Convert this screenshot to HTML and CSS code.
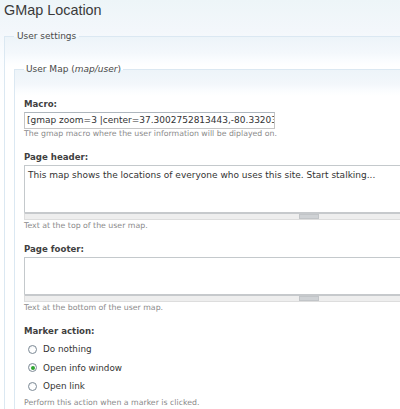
FILE: index.html
```html
<!DOCTYPE html>
<html lang="en">
<head>
	<meta charset="UTF-8">
	<title>GMap Location</title>
	<link rel="stylesheet" href="styles.css">
</head>
<body>
	<div class="page">
		<h1 class="title">GMap Location</h1>
		<fieldset class="outer">
			<legend>User settings</legend>
			<fieldset class="inner">
				<legend>User Map (<em>map/user</em>)</legend>

				<div class="item">
					<label>Macro:</label>
					<div class="text-input">[gmap zoom=3 |center=37.3002752813443,-80.332031</div>
					<div class="desc">The gmap macro where the user information will be diplayed on.</div>
				</div>

				<div class="item">
					<label>Page header:</label>
					<div class="area big">This map shows the locations of everyone who uses this site. Start stalking...</div>
					<div class="grippie"><span></span></div>
					<div class="desc">Text at the top of the user map.</div>
				</div>

				<div class="item">
					<label>Page footer:</label>
					<div class="area small"></div>
					<div class="grippie"><span></span></div>
					<div class="desc">Text at the bottom of the user map.</div>
				</div>

				<div class="item">
					<label>Marker action:</label>
					<div class="radios">
						<div class="radio"><span class="dot"></span>Do nothing</div>
						<div class="radio"><span class="dot on"></span>Open info window</div>
						<div class="radio"><span class="dot"></span>Open link</div>
					</div>
					<div class="desc">Perform this action when a marker is clicked.</div>
				</div>
			</fieldset>
		</fieldset>
	</div>
</body>
</html>
```

FILE: styles.css
```css
*{
	margin: 0;
	padding: 0;
	box-sizing: border-box;
}
html{
	overflow: hidden;
}
body{
	background: #fff;
	font-family: "DejaVu Sans", Verdana, sans-serif;
	font-size: 9px;
	color: #494949;
}
.page{
	width: 640px;
	background: linear-gradient(#edf5f8 0, #f3f7fb 30px, #fbfdff 60px, #fff 100px);
	padding: 1px 0 0 4px;
}
.title{
	font-family: "Liberation Sans", Arial, sans-serif;
	font-weight: normal;
	font-size: 14.4px;
	color: #3a3a3a;
	height: 30px;
	line-height: 18px;
}
fieldset{
	border: 1px solid #dbe8f2;
	border-right: none;
}
legend{
	padding: 0 3px;
	margin-left: 0;
	font-size: 9px;
	color: #494949;
}
.outer{
	padding: 23px 0 0 9px;
	background: linear-gradient(#edf4f9 0, #f4f8fc 16px, #fbfdff 24px, #fff 30px);
}
.inner{
	padding: 22px 0 0 9px;
	background: linear-gradient(#edf4f9 0, #f3f7fb 14px, #fafcfe 20px, #fff 26px);
}
.inner legend{
	padding: 0 2px;
}
.item{
	margin-bottom: 10px;
}
label{
	display: block;
	font-weight: bold;
	font-size: 8.6px;
	color: #3f3f3f;
	height: 16px;
	line-height: 16px;
}
.text-input{
	width: 251px;
	height: 17px;
	border: 1px solid #c6c6c6;
	border-top-color: #aeb6bd;
	padding: 0 2px;
	line-height: 15px;
	white-space: nowrap;
	overflow: hidden;
	background: #fff;
	font-size: 9px;
	color: #333;
}
.area{
	width: 570px;
	border: 1px solid #c4c9cc;
	border-bottom: none;
	background: #fff;
	padding: 2px 3px;
	font-size: 9px;
	color: #333;
	line-height: 14px;
}
.area.big{
	height: 47px;
}
.area.small{
	height: 37px;
}
.grippie{
	width: 570px;
	height: 8px;
	background: #eee;
	border: 1px solid #ddd;
	border-top: 2px solid #c6c9cc;
	display: flex;
	justify-content: center;
	align-items: center;
}
.grippie span{
	width: 20px;
	height: 5px;
	background: #cfd2d5;
	border: 1px solid #c2c5c8;
}
.desc{
	font-size: 7.8px;
	color: #8a8a8a;
	line-height: 10px;
}
.grippie + .desc{
	margin-top: 1px;
}
.radios{
	margin-top: 1px;
	margin-bottom: 2px;
}
.radio{
	display: flex;
	align-items: center;
	font-size: 8.8px;
	color: #333;
	height: 18.5px;
	padding-left: 4px;
}
.dot{
	width: 9px;
	height: 9px;
	border: 1px solid #7d8a96;
	border-radius: 50%;
	background: radial-gradient(circle at 60% 65%, #fff 40%, #e6e9ec 100%);
	margin-right: 6px;
	display: flex;
	align-items: center;
	justify-content: center;
}
.dot.on::after{
	content: "";
	width: 4px;
	height: 4px;
	border-radius: 50%;
	background: #2fa52f;
}
```
